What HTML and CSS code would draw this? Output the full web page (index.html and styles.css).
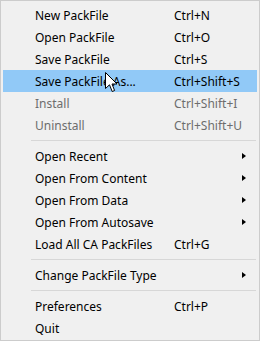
FILE: index.html
```html
<!DOCTYPE html>
<html>
<head>
<meta charset="utf-8">
<link rel="stylesheet" href="styles.css">
</head>
<body>
<div class="menu">
  <div class="item"><span class="label">New PackFile</span><span class="key">Ctrl+N</span><span class="arrow"></span></div>
  <div class="item"><span class="label">Open PackFile</span><span class="key">Ctrl+O</span><span class="arrow"></span></div>
  <div class="item"><span class="label">Save PackFile</span><span class="key">Ctrl+S</span><span class="arrow"></span></div>
  <div class="item active"><span class="label">Save PackFile As...</span><span class="key">Ctrl+Shift+S</span><span class="arrow"></span>
    <svg class="cursor" width="13" height="21" viewBox="0 0 13 21"><path d="M0.5 0.5 L0.5 16.5 L4.5 12.8 L7.2 19.5 L9.6 18.5 L7 12 L12 12 Z" fill="#fff" stroke="#000" stroke-width="1" stroke-linejoin="miter"/></svg>
  </div>
  <div class="item disabled"><span class="label">Install</span><span class="key">Ctrl+Shift+I</span><span class="arrow"></span></div>
  <div class="item disabled"><span class="label">Uninstall</span><span class="key">Ctrl+Shift+U</span><span class="arrow"></span></div>
  <div class="sep"></div>
  <div class="item"><span class="label">Open Recent</span><span class="key"></span><span class="arrow tri"></span></div>
  <div class="item"><span class="label">Open From Content</span><span class="key"></span><span class="arrow tri"></span></div>
  <div class="item"><span class="label">Open From Data</span><span class="key"></span><span class="arrow tri"></span></div>
  <div class="item"><span class="label">Open From Autosave</span><span class="key"></span><span class="arrow tri"></span></div>
  <div class="item"><span class="label">Load All CA PackFiles</span><span class="key">Ctrl+G</span><span class="arrow"></span></div>
  <div class="sep"></div>
  <div class="item"><span class="label">Change PackFile Type</span><span class="key"></span><span class="arrow tri"></span></div>
  <div class="sep"></div>
  <div class="item"><span class="label">Preferences</span><span class="key">Ctrl+P</span><span class="arrow"></span></div>
  <div class="item"><span class="label">Quit</span><span class="key"></span><span class="arrow"></span></div>
</div>
</body>
</html>
```
FILE: styles.css
```css
html, body {
  margin: 0;
  padding: 0;
  background: #f0f0f0;
}
.menu {
  box-sizing: border-box;
  width: 260px;
  height: 341px;
  border: 1px solid #cccccc;
  background: #f0f0f0;
  padding: 3px 2px 1px 2px;
  font-family: "Noto Sans", "Open Sans", sans-serif;
  font-size: 12px;
  color: #000;
  display: flex;
  flex-direction: column;
}
.item {
  position: relative;
  height: 22px;
  display: flex;
  align-items: center;
  padding-left: 32px;
}
.item.active {
  background: #91c9f7;
}
.item.disabled {
  color: #6d6d6d;
}
.label {
  width: 139px;
  white-space: nowrap;
}
.key {
  width: 68px;
  white-space: nowrap;
}
.arrow {
  width: 4px;
  height: 7px;
}
.tri {
  width: 0;
  height: 0;
  border-top: 3.5px solid transparent;
  border-bottom: 3.5px solid transparent;
  border-left: 4px solid #000;
}
.sep {
  height: 9px;
  display: flex;
  align-items: center;
  padding-left: 28px;
  padding-right: 1px;
}
.sep::before {
  content: "";
  flex: 1;
  height: 1px;
  background: #d7d7d7;
}
.cursor {
  position: absolute;
  left: 102px;
  top: 2px;
}
```
